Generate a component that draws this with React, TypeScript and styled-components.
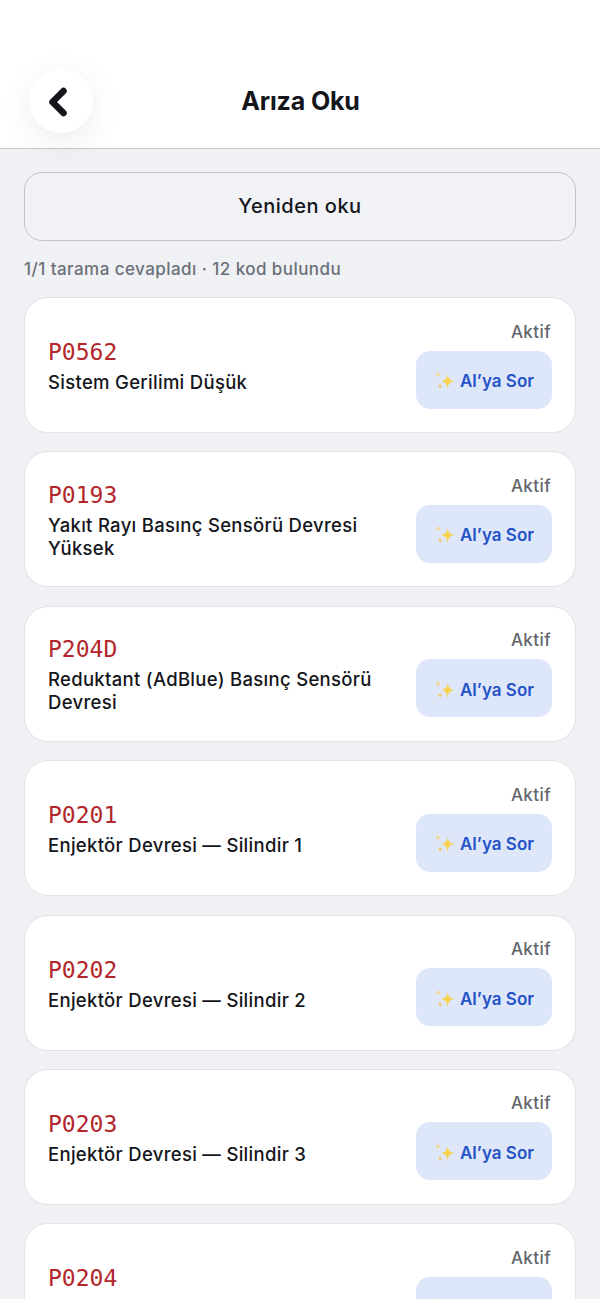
import { createGlobalStyle, styled } from "styled-components";
import { ChevronLeft } from "lucide-react";

const GlobalStyle = createGlobalStyle`
  html, body {
    margin: 0;
    padding: 0;
    background: #eff1f5;
  }
  * {
    box-sizing: border-box;
  }
`;

const Page = styled.div`
  height: 1299px;
  overflow: hidden;
  background: #eff1f5;
  font-family: Inter, "Liberation Sans", sans-serif;
`;

const Header = styled.header`
  height: 149px;
  padding: 69px 28px 0 29px;
  display: grid;
  grid-template-columns: 64px 1fr 64px;
  align-items: start;
  background: #fff;
  border-bottom: 1px solid #c4c6cb;
`;

const BackButton = styled.button`
  width: 64px;
  height: 64px;
  padding: 1px 6px 0 0;
  display: flex;
  align-items: center;
  justify-content: center;
  border: none;
  border-radius: 50%;
  background: #fff;
  color: #14161b;
  box-shadow: 0 8px 32px rgba(0, 0, 0, 0.08);
`;

const Title = styled.h1`
  margin: 0;
  height: 64px;
  line-height: 64px;
  text-align: center;
  font-size: 25px;
  font-weight: 700;
  letter-spacing: -0.15px;
  color: #14161b;
`;

const Content = styled.main`
  padding: 23px 24px 0;
`;

const RescanButton = styled.button`
  width: 100%;
  height: 69px;
  padding: 0 0 2px;
  border: 1.5px solid #c0c3c9;
  border-radius: 18px;
  background: #f0f2f6;
  font-family: inherit;
  font-size: 20px;
  font-weight: 500;
  letter-spacing: 0.5px;
  color: #14161b;
`;

const Summary = styled.p`
  margin: 16px 0;
  line-height: 24px;
  font-size: 17px;
  font-weight: 500;
  letter-spacing: 0.44px;
  color: #6b7078;
`;

const List = styled.div`
  display: flex;
  flex-direction: column;
  gap: 18.4px;
`;

const Card = styled.article`
  height: 136px;
  padding: 0 24px 0 23px;
  display: flex;
  align-items: center;
  justify-content: space-between;
  gap: 16px;
  background: #fff;
  border: 1px solid #e1e3e7;
  border-radius: 24px;
`;

const CardText = styled.div`
  flex: 1;
  min-width: 0;
  padding-top: 5px;
`;

const Code = styled.div`
  height: 30px;
  line-height: 23px;
  font-family: "DejaVu Sans Mono", "Liberation Mono", monospace;
  font-size: 23px;
  color: #b3262c;
`;

const Name = styled.div`
  line-height: 23px;
  font-size: 18.5px;
  font-weight: 500;
  letter-spacing: 0.3px;
  color: #14161b;
`;

const CardSide = styled.div`
  flex: none;
  width: 136px;
  padding-bottom: 2px;
  display: flex;
  flex-direction: column;
  align-items: flex-end;
  gap: 7px;
  margin-right: -1px;
`;

const Status = styled.span`
  line-height: 24px;
  margin-right: 1px;
  font-size: 17px;
  font-weight: 500;
  letter-spacing: 0.4px;
  color: #63666c;
`;

const AskButton = styled.button`
  width: 136px;
  height: 58px;
  padding: 3px 0 0;
  display: flex;
  align-items: center;
  justify-content: center;
  gap: 4px;
  border: none;
  border-radius: 14px;
  background: #dee6f9;
  font-family: inherit;
  font-size: 17px;
  font-weight: 600;
  color: #2553c8;
`;

const Sparkles = () => (
  <svg width="22" height="22" viewBox="0 0 20 20" aria-hidden="true">
    <path d="M12.5 3.5 C13 8 14.5 9.5 19 10 C14.5 10.5 13 12.5 12.5 17.5 C12 12.5 10 10.5 6 10 C10 9.5 12 8 12.5 3.5Z" fill="#f8d34f" />
    <path d="M3.7 1 C3.9 3.2 4.5 3.9 6.4 4.2 C4.5 4.5 3.9 5.2 3.7 7.4 C3.5 5.2 2.9 4.5 1 4.2 C2.9 3.9 3.5 3.2 3.7 1Z" fill="#f6d67a" />
    <path d="M5.5 12 C5.7 13.9 6.2 14.5 8 14.8 C6.2 15.1 5.7 15.8 5.5 18 C5.3 15.8 4.8 15.1 3 14.8 C4.8 14.5 5.3 13.9 5.5 12Z" fill="#f2c75a" />
  </svg>
);

const faults = [
  { code: "P0562", name: "Sistem Gerilimi Düşük" },
  { code: "P0193", name: "Yakıt Rayı Basınç Sensörü Devresi Yüksek" },
  { code: "P204D", name: "Reduktant (AdBlue) Basınç Sensörü Devresi" },
  { code: "P0201", name: "Enjektör Devresi — Silindir 1" },
  { code: "P0202", name: "Enjektör Devresi — Silindir 2" },
  { code: "P0203", name: "Enjektör Devresi — Silindir 3" },
  { code: "P0204", name: "Enjektör Devresi — Silindir 4" },
];

export default function App() {
  return (
    <Page>
      <GlobalStyle />
      <Header>
        <BackButton aria-label="Geri">
          <ChevronLeft size={44} strokeWidth={3.6} />
        </BackButton>
        <Title>Arıza Oku</Title>
      </Header>
      <Content>
        <RescanButton>Yeniden oku</RescanButton>
        <Summary>1/1 tarama cevapladı · 12 kod bulundu</Summary>
        <List>
          {faults.map((fault) => (
            <Card key={fault.code}>
              <CardText>
                <Code>{fault.code}</Code>
                <Name>{fault.name}</Name>
              </CardText>
              <CardSide>
                <Status>Aktif</Status>
                <AskButton>
                  <Sparkles />
                  Al’ya Sor
                </AskButton>
              </CardSide>
            </Card>
          ))}
        </List>
      </Content>
    </Page>
  );
}
